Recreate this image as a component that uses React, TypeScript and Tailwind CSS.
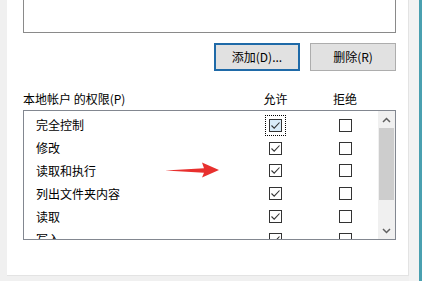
import React from 'react';

const rows = [
  { name: '完全控制', allow: true, focus: true },
  { name: '修改', allow: true },
  { name: '读取和执行', allow: true },
  { name: '列出文件夹内容', allow: true },
  { name: '读取', allow: true },
  { name: '写入', allow: true },
];

function Box({ checked, focus }: { checked?: boolean; focus?: boolean }) {
  return (
    <div className={focus ? 'p-[3px] outline-1 outline-dotted outline-black' : 'p-[3px]'}>
      <div
        className={
          'w-[13px] h-[13px] border border-[#333] flex items-center justify-center ' +
          (focus ? 'bg-[#d9ecf9]' : 'bg-white')
        }
      >
        {checked && (
          <svg width="11" height="11" viewBox="0 0 11 11" fill="none">
            <path d="M1.5 5.5 L4.2 8.2 L9.5 2.5" stroke="#333" strokeWidth="1.1" />
          </svg>
        )}
      </div>
    </div>
  );
}

export default function App() {
  return (
    <div
      className="w-[422px] h-[281px] bg-[#f0f0f0] flex overflow-hidden text-[12px] text-black"
      style={{ fontFamily: '"Noto Sans CJK SC", "Microsoft YaHei", sans-serif' }}
    >
      <div className="w-[7px] shrink-0" />
      <div className="relative w-[402px] h-[276px] bg-white border-r border-b border-[#e3e3e3] pl-[16px] pr-[12px] shrink-0">
        {/* top list (cut off) */}
        <div className="h-[33px] border-x border-b border-[#8a8a8a]" />

        {/* buttons */}
        <div className="flex justify-end gap-[10px] mt-[10px]">
          <button className="w-[86px] h-[28px] bg-[#e1e1e1] border-2 border-[#1f6aa8] leading-none">添加(D)...</button>
          <button className="w-[86px] h-[28px] bg-[#e1e1e1] border border-[#adadad] leading-none">删除(R)</button>
        </div>

        {/* header */}
        <div className="flex mt-[19px] h-[20px] items-center pb-[3px] pl-px">
          <div className="w-[216px] -ml-px">本地帐户 的权限(P)</div>
          <div className="w-[73px] text-center">允许</div>
          <div className="w-[66px] text-center">拒绝</div>
        </div>

        {/* permission list */}
        <div className="h-[130px] border border-[#828790] flex overflow-hidden">
          <div className="flex-1 pt-[3px] overflow-hidden">
            {rows.map((r) => (
              <div key={r.name} className="flex items-center h-[22.8px]">
                <div className="w-[216px] pl-[12px]">{r.name}</div>
                <div className="w-[73px] flex justify-center">
                  <Box checked={r.allow} focus={r.focus} />
                </div>
                <div className="w-[66px] flex justify-center">
                  <Box />
                </div>
              </div>
            ))}
          </div>
          <div className="w-[17px] bg-[#f0f0f0] flex flex-col items-center">
            <div className="h-[17px] flex items-center justify-center">
              <svg width="9" height="6" viewBox="0 0 9 6" fill="none">
                <path d="M1 5 L4.5 1.5 L8 5" stroke="#606060" strokeWidth="1.5" />
              </svg>
            </div>
            <div className="w-[15px] h-[72px] bg-[#cdcdcd]" />
            <div className="flex-1" />
            <div className="h-[17px] flex items-center justify-center">
              <svg width="9" height="6" viewBox="0 0 9 6" fill="none">
                <path d="M1 1 L4.5 4.5 L8 1" stroke="#606060" strokeWidth="1.5" />
              </svg>
            </div>
          </div>
        </div>

        {/* red arrow overlay */}
        <svg className="absolute left-[158px] top-[162px]" width="56" height="16" viewBox="0 0 56 16">
          <path d="M0 8.5 L39 6.2 L37 0.5 L54 8 L37 15.5 L39 10.8 Z" fill="#e8302e" />
        </svg>
      </div>
      <div className="w-[10px] shrink-0 bg-[#f3f3f3]" />
      <div className="flex-1 bg-[#4aa0b0]" />
    </div>
  );
}
